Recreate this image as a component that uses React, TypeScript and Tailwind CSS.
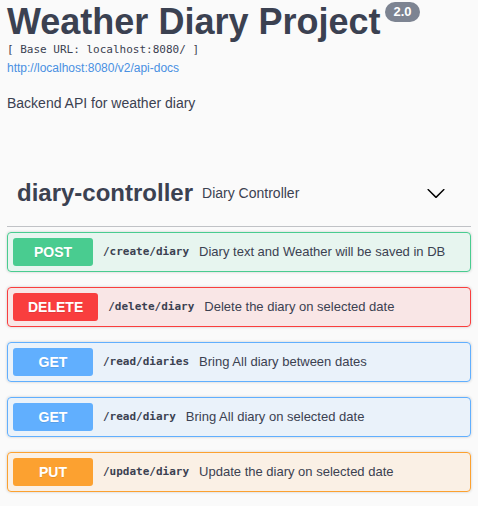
const OPERATIONS = [
	{
		method: "POST",
		path: "/create/diary",
		summary: "Diary text and Weather will be saved in DB",
		badgeClassName: "bg-[#49cc90]",
		blockClassName: "border-[#49cc90] bg-[rgba(73,204,144,0.1)]",
	},
	{
		method: "DELETE",
		path: "/delete/diary",
		summary: "Delete the diary on selected date",
		badgeClassName: "bg-[#f93e3e]",
		blockClassName: "border-[#f93e3e] bg-[rgba(249,62,62,0.1)]",
	},
	{
		method: "GET",
		path: "/read/diaries",
		summary: "Bring All diary between dates",
		badgeClassName: "bg-[#61affe]",
		blockClassName: "border-[#61affe] bg-[rgba(97,175,254,0.1)]",
	},
	{
		method: "GET",
		path: "/read/diary",
		summary: "Bring All diary on selected date",
		badgeClassName: "bg-[#61affe]",
		blockClassName: "border-[#61affe] bg-[rgba(97,175,254,0.1)]",
	},
	{
		method: "PUT",
		path: "/update/diary",
		summary: "Update the diary on selected date",
		badgeClassName: "bg-[#fca130]",
		blockClassName: "border-[#fca130] bg-[rgba(252,161,48,0.1)]",
	},
];

function ChevronDown() {
	return (
		<svg width="20" height="20" viewBox="0 0 20 20" className="fill-black">
			<path d="M17.418 6.109c.272-.268.709-.268.979 0s.271.701 0 .969l-7.908 7.83c-.27.268-.707.268-.979 0l-7.908-7.83c-.27-.268-.27-.701 0-.969.271-.268.709-.268.979 0L10 13.25l7.418-7.141z" />
		</svg>
	);
}

export default function App() {
	return (
		<div className="min-h-[506px] w-full bg-[#fafafa] px-[7px] font-['Liberation_Sans',Arial,sans-serif] text-[#3b4151]">
			<div className="flex items-start pt-[4px]">
				<h2 className="text-[36px] font-bold leading-[36px]">
					Weather Diary Project
				</h2>
				<span className="-mt-[2px] ml-[5px] flex h-[20px] items-center rounded-full bg-[#7d8492] px-[8px] text-[13px] font-bold text-white">
					2.0
				</span>
			</div>
			<p className="mt-[2px] font-['DejaVu_Sans_Mono',monospace] text-[11px] leading-[16px]">
				[ Base URL: localhost:8080/ ]
			</p>
			<a
				href="#"
				className="mt-[2px] block text-[12px] leading-[16px] text-[#4990e2]"
			>
				http://localhost:8080/v2/api-docs
			</a>
			<p className="mt-[17px] text-[14px] leading-[20px]">
				Backend API for weather diary
			</p>

			<div className="mt-[47px] flex h-[67px] items-center border-b border-[rgba(59,65,81,0.3)] pl-[10px]">
				<h3 className="text-[24px] font-bold leading-[32px]">
					diary-controller
				</h3>
				<span className="ml-[9px] text-[14px]">Diary Controller</span>
				<div className="ml-auto mr-[25px] flex">
					<ChevronDown />
				</div>
			</div>

			<div className="mt-[5px] flex flex-col gap-[15px]">
				{OPERATIONS.map((operation) => (
					<div
						key={operation.path}
						className={`flex items-center rounded-[4px] border p-[5px] shadow-[0_0_3px_rgba(0,0,0,0.19)] ${operation.blockClassName}`}
					>
						<span
							className={`flex h-[28px] min-w-[80px] items-center justify-center rounded-[3px] px-[15px] text-[14px] font-bold text-white [text-shadow:0_1px_0_rgba(0,0,0,0.1)] ${operation.badgeClassName}`}
						>
							{operation.method}
						</span>
						<span className="px-[10px] font-['DejaVu_Sans_Mono',monospace] text-[11px] font-bold">
							{operation.path}
						</span>
						<span className="text-[13px]">{operation.summary}</span>
					</div>
				))}
			</div>
		</div>
	);
}
